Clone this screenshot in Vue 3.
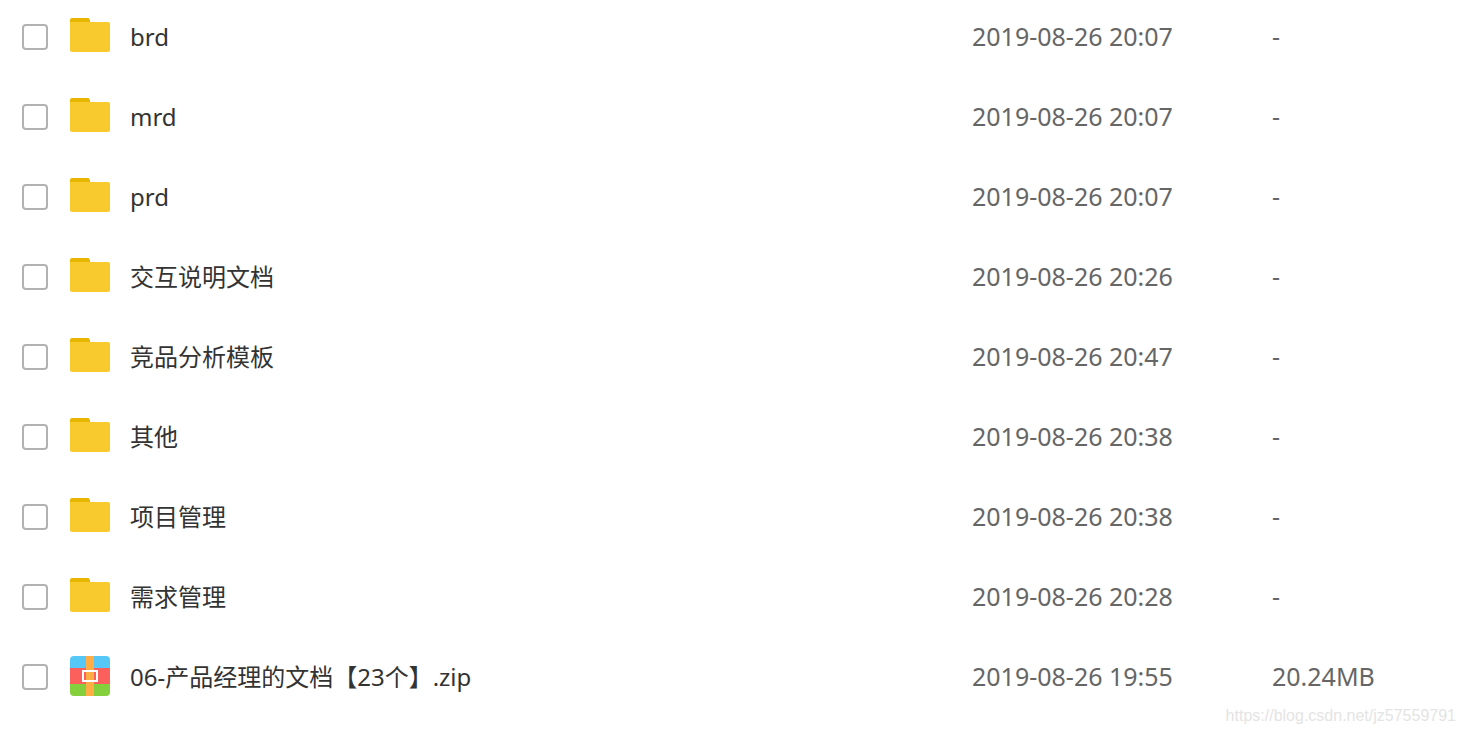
<script setup>
import { ref } from "vue"

const files = ref([
  { name: "brd", type: "folder", time: "2019-08-26 20:07", size: "-", checked: false },
  { name: "mrd", type: "folder", time: "2019-08-26 20:07", size: "-", checked: false },
  { name: "prd", type: "folder", time: "2019-08-26 20:07", size: "-", checked: false },
  { name: "交互说明文档", type: "folder", time: "2019-08-26 20:26", size: "-", checked: false },
  { name: "竞品分析模板", type: "folder", time: "2019-08-26 20:47", size: "-", checked: false },
  { name: "其他", type: "folder", time: "2019-08-26 20:38", size: "-", checked: false },
  { name: "项目管理", type: "folder", time: "2019-08-26 20:38", size: "-", checked: false },
  { name: "需求管理", type: "folder", time: "2019-08-26 20:28", size: "-", checked: false },
  { name: "06-产品经理的文档【23个】.zip", type: "zip", time: "2019-08-26 19:55", size: "20.24MB", checked: false },
])
</script>

<template>
  <main class="file-list">
    <table class="file-table">
      <colgroup>
        <col />
        <col class="col-time" />
        <col class="col-size" />
      </colgroup>
      <tbody>
        <tr v-for="(file, index) in files" :key="file.name">
          <td>
            <div class="file-name">
              <input :id="`file-${index}`" v-model="file.checked" type="checkbox" class="checkbox" />
              <svg v-if="file.type === 'folder'" class="file-icon" viewBox="0 0 40 40" aria-hidden="true">
                <path fill="#e8b600" d="M0 8V4a2 2 0 0 1 2-2h15.500c1.200 0 1.500.5 2.500 2v4z" />
                <path fill="#f8ca2d" d="M0 6h38a2 2 0 0 1 2 2v26a2 2 0 0 1-2 2H2a2 2 0 0 1-2-2z" />
              </svg>
              <svg v-else class="file-icon zip-icon" viewBox="0 0 40 40" aria-hidden="true">
                <path fill="#55c8f8" d="M0 0h40v12H0z" />
                <path fill="#fc605c" d="M0 12h40v16H0z" />
                <path fill="#83cf3c" d="M0 28h40v12H0z" />
                <path fill="#ffae45" d="M16 0h8v40h-8z" />
                <path fill="none" stroke="#fff" stroke-width="2" d="M13 15h14v10H13z" />
              </svg>
              <label :for="`file-${index}`">{{ file.name }}</label>
            </div>
          </td>
          <td class="meta">{{ file.time }}</td>
          <td class="meta">{{ file.size }}</td>
        </tr>
      </tbody>
    </table>
    <span class="watermark">https://blog.csdn.net/jz57559791</span>
  </main>
</template>

<style>
body {
  background: #fff;
}
</style>

<style scoped>
.file-list {
  position: relative;
  min-height: 100vh;
  font-family: "Noto Sans", "Noto Sans CJK SC", sans-serif;
  font-size: 24px;
  line-height: 40px;
  color: #333;
}

.file-table {
  width: 100%;
  table-layout: fixed;
  border-collapse: collapse;
}

.col-time {
  width: 300px;
}

.col-size {
  width: 191px;
}

td {
  padding: 16px 0 24px;
  height: 40px;
  vertical-align: top;
  white-space: nowrap;
}

.file-name {
  display: flex;
  align-items: center;
  height: 40px;
  padding-left: 22px;
}

.file-name label {
  padding-top: 2px;
}

.checkbox {
  appearance: none;
  box-sizing: border-box;
  width: 26px;
  height: 26px;
  margin: 2px 22px 0 0;
  border: 2px solid #b2b2b2;
  border-radius: 4px;
  background: #fff;
  cursor: pointer;
}

.checkbox:checked {
  border-color: #3b8cff;
  background: #3b8cff;
}

.file-icon {
  flex: none;
  width: 40px;
  height: 40px;
  margin-right: 20px;
}

.zip-icon {
  border-radius: 4px;
}

.meta {
  font-size: 25px;
  color: #666;
}

.watermark {
  position: absolute;
  right: 7px;
  bottom: 7px;
  font-family: "Liberation Sans", Arial, sans-serif;
  font-size: 16px;
  line-height: 20px;
  color: #e4e4e4;
}
</style>
